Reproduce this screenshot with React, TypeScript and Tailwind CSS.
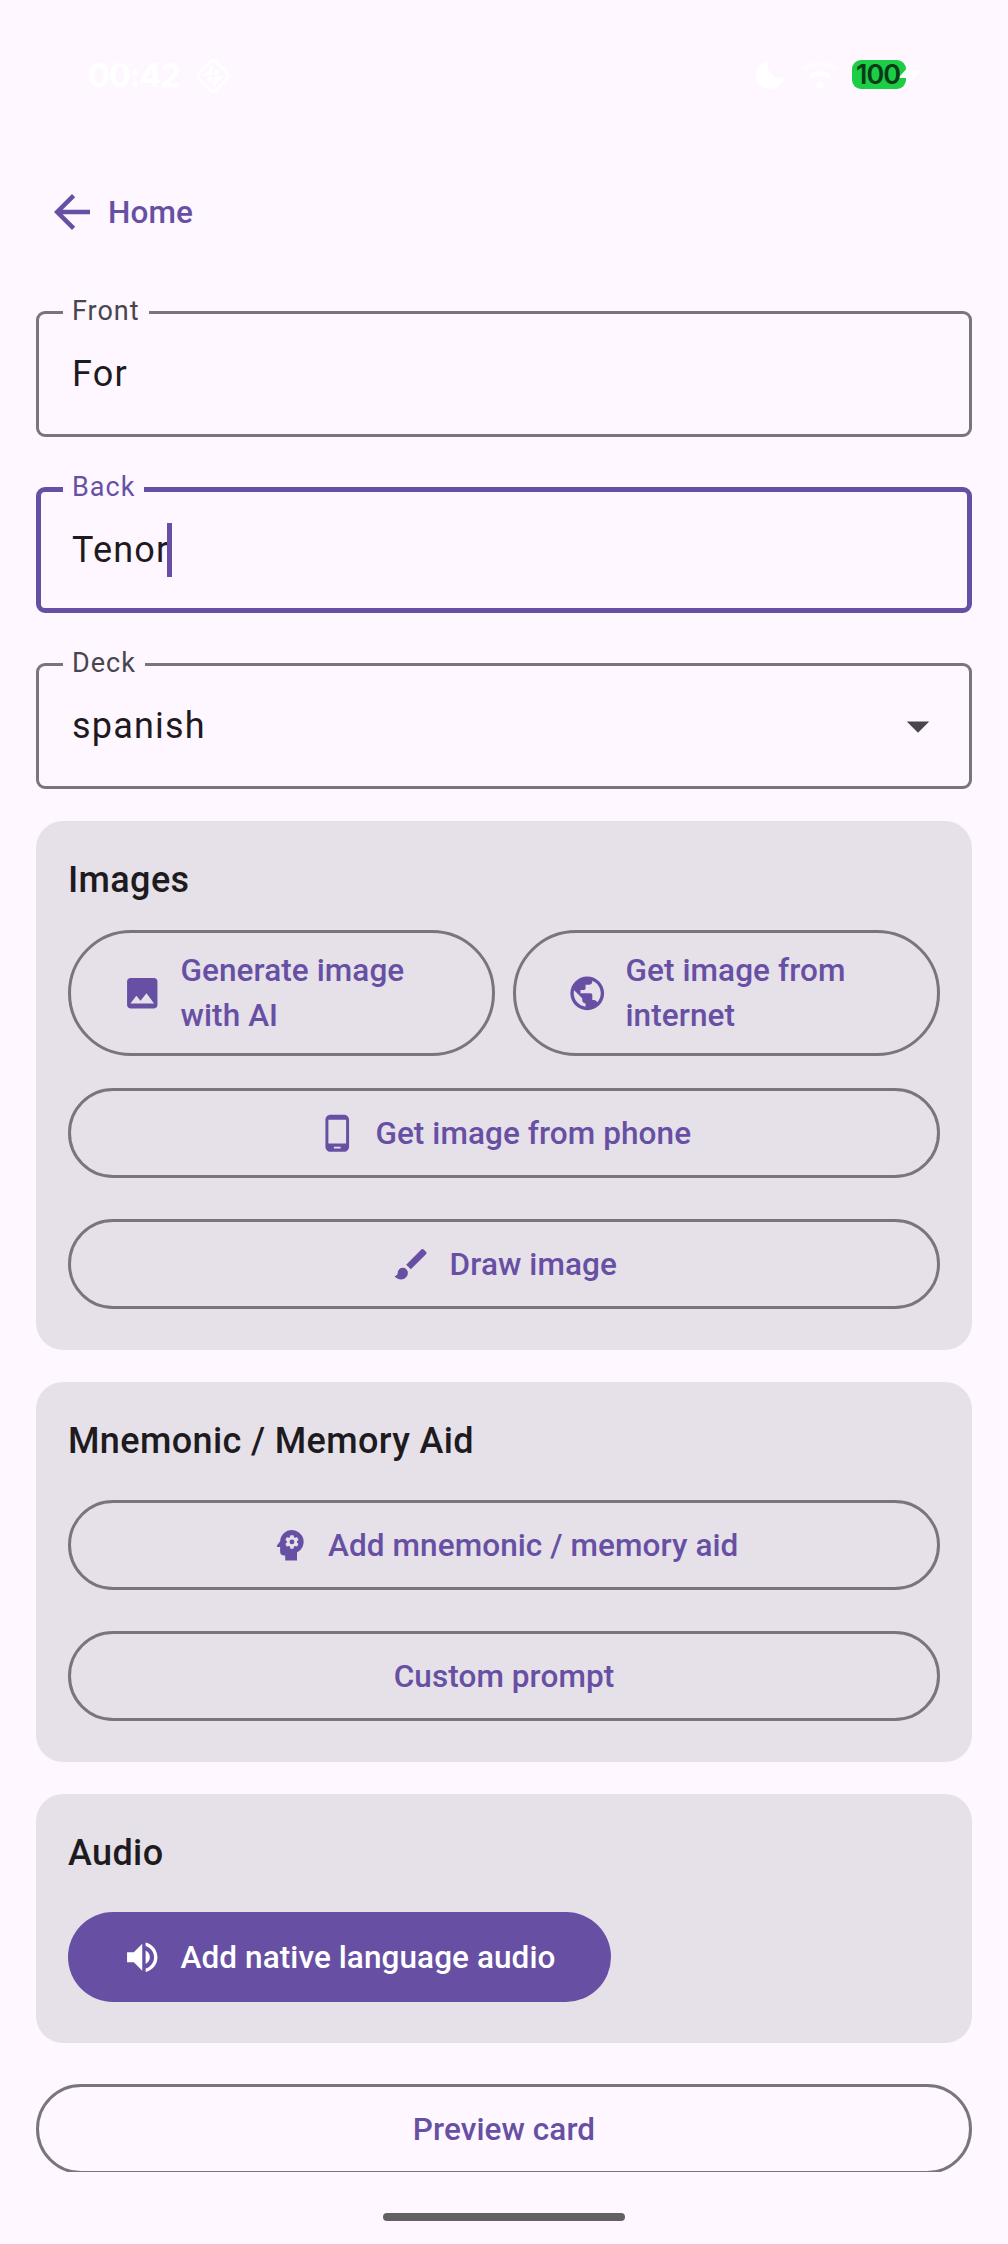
import type { ReactNode } from 'react';
import type { IconType } from 'react-icons';
import {
  MdArrowBack,
  MdArrowDropDown,
  MdBrush,
  MdImage,
  MdPhoneAndroid,
  MdPsychology,
  MdPublic,
  MdVolumeUp,
} from 'react-icons/md';

function StatusBar() {
  return (
    <header className="flex h-[149px] shrink-0 items-center pl-[88px] pr-[102px] text-white">
      <span className="w-[92px] whitespace-nowrap font-['Inter'] text-[33px] leading-[40px] font-bold tracking-[-1.4px]">00:42</span>
      <svg className="ml-[17px] mt-[3px] size-8" viewBox="0 0 32 32" fill="none">
        <rect x="4" y="4" width="24" height="24" rx="4" stroke="currentColor" strokeWidth="2.4" transform="rotate(45 16 16)" />
        <path
          d="M15.500 4v11.500L11 11zM16.500 28V16.500L21 21zM5 15.500h10L11 11zM27 16.500H17L21 21zM17 9l5 1-1 5zM15 23l-5-1 1-5zM17 15h4l-4-4zM15 17h-4l4 4z"
          fill="currentColor"
        />
      </svg>
      <div className="ml-auto flex items-center">
        <svg className="size-7" viewBox="0 0 28 28" fill="currentColor">
          <path d="M10 0.500Q12 0 12 2.500C11 11 17 17.500 26 17q2.500 0 1.500 2.500C25 25 20 28 14 28 6 28 0 22 0 14 0 7.500 4 2.500 10 .5z" />
        </svg>
        <svg className="ml-[18px] h-7 w-9" viewBox="0 0 36 28" fill="none" stroke="currentColor" strokeLinecap="round">
          <path d="M2 8C11 1 25 1 34 8" strokeWidth="4" opacity=".5" />
          <path d="M9 15c5-3.500 13-3.500 18 0" strokeWidth="4.500" />
          <circle cx="18" cy="24" r="3.500" fill="currentColor" stroke="none" />
        </svg>
        <div className="relative ml-[14px] flex h-[29px] w-[54px] items-center rounded-[9px] bg-[#1bce45] pl-[4px]">
          <span className="font-['Inter'] text-[27px] leading-[29px] font-semibold tracking-[-1px] text-[#083a17]">100</span>
          <svg className="absolute top-[5px] left-[47px] h-5 w-[22px]" viewBox="0 0 22 20" fill="currentColor">
            <path d="M11 0 1 11q-1 2 1 2h6l-2 7L20 8q1-2-1-2h-7l2-6z" />
          </svg>
        </div>
      </div>
    </header>
  );
}

function Field({ label, value, focused = false, select = false }: { label: string; value: string; focused?: boolean; select?: boolean }) {
  return (
    <div
      className={
        focused
          ? 'relative flex h-[126px] items-center rounded-[9px] border-5 border-[#6750a4] pr-[22px] pl-[31px]'
          : 'relative flex h-[126px] items-center rounded-[9px] border-3 border-[#79747e] pr-[24px] pl-[33px]'
      }
    >
      <span
        className={
          focused
            ? 'absolute -top-[23px] left-[22px] bg-[#fef7ff] px-[9px] text-[27px] leading-9 tracking-[1px] text-[#6750a4]'
            : 'absolute -top-[21px] left-[24px] bg-[#fef7ff] px-[9px] text-[27px] leading-9 tracking-[1px] text-[#49454f]'
        }
      >
        {label}
      </span>
      <span className="text-[36px] leading-[54px] tracking-[1.2px] text-[#1d1b20]">{value}</span>
      {focused && <span className="-ml-[2px] h-[54px] w-[5px] bg-[#6750a4]" />}
      {select && <MdArrowDropDown className="ml-auto size-[54px] text-[#49454f]" />}
    </div>
  );
}

function OutlinedButton({ icon: Icon, children, tall = false }: { icon?: IconType; children: ReactNode; tall?: boolean }) {
  return (
    <button
      className={
        tall
          ? 'flex h-[126px] flex-1 items-center rounded-full border-3 border-[#79747e] px-[51px] text-left text-[31.5px] leading-[45px] font-medium tracking-[0.08px] text-[#6750a4]'
          : 'flex h-[90px] w-full items-center justify-center rounded-full border-3 border-[#79747e] text-[31.5px] leading-[45px] font-medium tracking-[0.08px] text-[#6750a4]'
      }
    >
      {Icon && <Icon className="mr-[18px] size-[40.5px] shrink-0" />}
      <span>{children}</span>
    </button>
  );
}

function Card({ title, children }: { title: string; children: ReactNode }) {
  return (
    <section className="mb-8 rounded-[27px] bg-[#e6e0e9] px-8 pt-8 pb-[41px]">
      <h2 className="text-[36px] leading-[54px] font-medium tracking-[0.38px] text-[#1d1b20]">{title}</h2>
      {children}
    </section>
  );
}

export default function App() {
  return (
    <div className="flex h-[2244px] w-[1008px] flex-col overflow-hidden bg-[#fef7ff] font-['Roboto',sans-serif]">
      <StatusBar />
      <nav className="flex h-[126px] shrink-0 items-center pl-[45px] text-[#6750a4]">
        <MdArrowBack className="size-[54px]" />
        <span className="ml-[9px] text-[31.5px] leading-[45px] font-medium tracking-[0.15px]">Home</span>
      </nav>
      <main className="h-[1897px] shrink-0 overflow-hidden px-9 pt-[36px]">
        <div className="mb-8 flex flex-col gap-[50px]">
          <Field label="Front" value="For" />
          <Field label="Back" value="Tenor" focused />
          <Field label="Deck" value="spanish" select />
        </div>
        <Card title="Images">
          <div className="mt-[23px] flex gap-[18px]">
            <OutlinedButton icon={MdImage} tall>
              Generate image
              <br />
              with AI
            </OutlinedButton>
            <OutlinedButton icon={MdPublic} tall>
              Get image from
              <br />
              internet
            </OutlinedButton>
          </div>
          <div className="mt-8 flex flex-col gap-[41px]">
            <OutlinedButton icon={MdPhoneAndroid}>Get image from phone</OutlinedButton>
            <OutlinedButton icon={MdBrush}>Draw image</OutlinedButton>
          </div>
        </Card>
        <Card title="Mnemonic / Memory Aid">
          <div className="mt-8 flex flex-col gap-[41px]">
            <OutlinedButton icon={MdPsychology}>Add mnemonic / memory aid</OutlinedButton>
            <OutlinedButton>Custom prompt</OutlinedButton>
          </div>
        </Card>
        <Card title="Audio">
          <button className="mt-8 flex h-[90px] w-[543px] items-center rounded-full bg-[#6750a4] pl-[54px] text-[31.5px] leading-[45px] font-medium tracking-[0.08px] whitespace-nowrap text-white">
            <MdVolumeUp className="mr-[18px] size-[40.5px] shrink-0" />
            Add native language audio
          </button>
        </Card>
        <div className="pt-[9px]">
          <OutlinedButton>Preview card</OutlinedButton>
        </div>
      </main>
      <div className="flex flex-1 items-end justify-center pb-[23px]">
        <div className="h-2 w-[242px] rounded-full bg-[#646165]" />
      </div>
    </div>
  );
}
